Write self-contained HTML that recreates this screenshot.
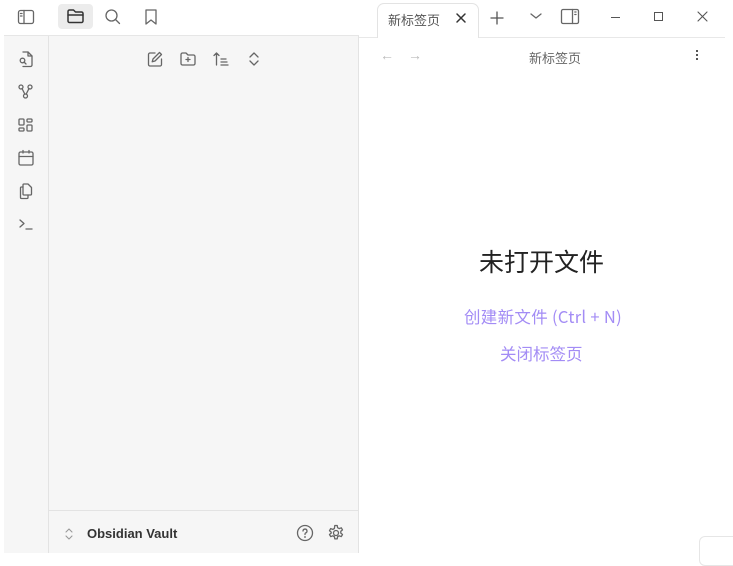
<!DOCTYPE html>
<html><head><meta charset="utf-8"><style>
*{margin:0;padding:0;box-sizing:border-box}
body{width:733px;height:558px;background:#fff;font-family:"Liberation Sans","Noto Sans CJK SC",sans-serif;position:relative;overflow:hidden}
.abs{position:absolute}
svg{position:absolute;fill:none;stroke:#666;stroke-width:1.3;stroke-linecap:round;stroke-linejoin:round}
.zh{font-family:"Noto Sans CJK SC","Liberation Sans",sans-serif}
</style></head><body>
<div class="abs" style="left:4px;top:36px;width:45px;height:517px;background:#f6f6f6;border-right:1px solid #e3e3e3"></div>
<div class="abs" style="left:49px;top:36px;width:310px;height:517px;background:#f6f6f6;border-right:1px solid #e3e3e3"></div>
<div class="abs" style="left:4px;top:35px;width:355px;height:1px;background:#e6e6e6"></div>
<div class="abs" style="left:49px;top:510px;width:310px;height:1px;background:#e3e3e3"></div>
<div class="abs" style="left:359px;top:37px;width:366px;height:1px;background:#e8e8e8"></div>
<svg style="left:17px;top:9px" width="18" height="16" viewBox="0 0 18 16"><rect x="1.5" y="1.5" width="15" height="13" rx="2"/><line x1="7" y1="1.5" x2="7" y2="14.5"/><line x1="3.5" y1="4.5" x2="5" y2="4.5"/><line x1="3.5" y1="7" x2="5" y2="7"/></svg>
<div class="abs" style="left:58px;top:4px;width:35px;height:25px;background:#ececec;border-radius:4px"></div>
<svg style="left:66px;top:8px;stroke:#333;stroke-width:1.5" width="19" height="16" viewBox="0 0 19 16"><path d="M2 3.5a1.5 1.5 0 0 1 1.5-1.5h4l2 2h6a1.5 1.5 0 0 1 1.5 1.5v7.5a1.5 1.5 0 0 1-1.5 1.5h-12a1.5 1.5 0 0 1-1.5-1.5z"/><line x1="2" y1="7" x2="17" y2="7"/></svg>
<svg style="left:104px;top:8px" width="18" height="18" viewBox="0 0 18 18"><circle cx="7.5" cy="7.5" r="5.5"/><line x1="11.5" y1="11.5" x2="15.5" y2="15.5"/></svg>
<svg style="left:143px;top:8px" width="16" height="18" viewBox="0 0 16 18"><path d="M3 2h10v14l-5-4-5 4z"/></svg>
<svg style="left:17px;top:50px" width="18" height="18" viewBox="0 0 18 18"><path d="M6 2h5l4 4v9a1.5 1.5 0 0 1-1.5 1.5H6"/><path d="M11 2v4h4"/><circle cx="5.5" cy="10.5" r="2.3"/><line x1="7" y1="12" x2="9" y2="14"/></svg>
<svg style="left:17px;top:83px" width="18" height="18" viewBox="0 0 18 18"><circle cx="4" cy="4" r="2"/><circle cx="13" cy="4" r="2"/><circle cx="8.5" cy="13" r="2"/><path d="M5 5.5l2.8 5.6M12 5.5l-2.8 5.6"/></svg>
<svg style="left:17px;top:117px" width="18" height="18" viewBox="0 0 18 18"><rect x="2" y="2" width="5" height="6" rx="1"/><rect x="10" y="2" width="5" height="3" rx="1"/><rect x="2" y="11" width="5" height="3" rx="1"/><rect x="10" y="8" width="5" height="6" rx="1"/></svg>
<svg style="left:17px;top:149px" width="18" height="18" viewBox="0 0 18 18"><rect x="2" y="3" width="14" height="13" rx="1.5"/><line x1="2" y1="7.5" x2="16" y2="7.5"/><line x1="6" y1="1.5" x2="6" y2="4"/><line x1="12" y1="1.5" x2="12" y2="4"/></svg>
<svg style="left:17px;top:182px" width="18" height="18" viewBox="0 0 18 18"><path d="M7 2h4l3.5 3.5V12a1 1 0 0 1-1 1H7a1 1 0 0 1-1-1V3a1 1 0 0 1 1-1z"/><path d="M6 5H4.5a1 1 0 0 0-1 1v9.5a1 1 0 0 0 1 1H10a1 1 0 0 0 1-1V13"/></svg>
<svg style="left:17px;top:216px" width="18" height="16" viewBox="0 0 18 16"><path d="M3 4l4 3.5-4 3.5"/><line x1="9" y1="13" x2="15" y2="13"/></svg>
<svg style="left:146px;top:50px" width="18" height="18" viewBox="0 0 18 18"><path d="M9 3H4a1.5 1.5 0 0 0-1.5 1.5v10A1.5 1.5 0 0 0 4 16h10a1.5 1.5 0 0 0 1.5-1.5V9"/><path d="M13.5 2.5l2 2-6.5 6.5-2.8.8.8-2.8z"/></svg>
<svg style="left:179px;top:50px" width="18" height="18" viewBox="0 0 18 18"><path d="M2 4.5A1.5 1.5 0 0 1 3.5 3h3.5l2 2h5.5a1.5 1.5 0 0 1 1.5 1.5v7a1.5 1.5 0 0 1-1.5 1.5h-11A1.5 1.5 0 0 1 2 13.5z"/><path d="M9 7.5v4M7 9.5h4"/></svg>
<svg style="left:212px;top:50px" width="18" height="18" viewBox="0 0 18 18"><path d="M4.5 15V3M2 5.5l2.5-2.5 2.5 2.5M9 9h5M9 12h6M9 15h7"/></svg>
<svg style="left:246px;top:50px" width="16" height="18" viewBox="0 0 16 18"><path d="M4 7l4-4 4 4M4 11l4 4 4-4"/></svg>
<svg style="left:63px;top:526px;stroke:#999;stroke-width:1.1" width="12" height="16" viewBox="0 0 12 16"><path d="M3 6l3-3 3 3M3 10l3 3 3-3"/></svg>
<div class="abs" style="left:87px;top:526px;font-size:13px;font-weight:bold;color:#333">Obsidian Vault</div>
<svg style="left:296px;top:524px" width="18" height="18" viewBox="0 0 18 18"><circle cx="9" cy="9" r="7.5"/><path d="M7 7a2 2 0 1 1 2.5 2c-.5.2-.5.7-.5 1.5"/><circle cx="9" cy="13" r=".3"/></svg>
<svg style="left:327px;top:524px" width="18" height="18" viewBox="0 0 18 18"><circle cx="9" cy="9" r="2.5"/><path d="M7.8 1.5h2.4l.4 2.2 1.6.9 2.1-.8 1.2 2.1-1.7 1.4v1.8l1.7 1.4-1.2 2.1-2.1-.8-1.6.9-.4 2.2H7.8l-.4-2.2-1.6-.9-2.1.8-1.2-2.1 1.7-1.4V8.1L2.5 6.7l1.2-2.1 2.1.8 1.6-.9z"/></svg>
<div class="abs" style="left:377px;top:3px;width:102px;height:35px;background:#fff;border:1px solid #e3e3e3;border-bottom:none;border-radius:7px 7px 0 0"></div>
<div class="abs zh" style="left:388px;top:10px;font-size:13px;color:#555">新标签页</div>
<svg style="left:455px;top:12px;stroke:#333;stroke-width:1.5" width="12" height="12" viewBox="0 0 12 12"><path d="M2 2l8 8M10 2l-8 8"/></svg>
<svg style="left:490px;top:11px;stroke:#555" width="14" height="14" viewBox="0 0 14 14"><path d="M7 1v12M1 7h12"/></svg>
<svg style="left:529px;top:11px;stroke:#666" width="14" height="10" viewBox="0 0 14 10"><path d="M2 3l5 4 5-4"/></svg>
<svg style="left:560px;top:8px" width="20" height="17" viewBox="0 0 20 17"><rect x="1.5" y="1.5" width="17" height="14" rx="1.5"/><line x1="12.5" y1="1.5" x2="12.5" y2="15.5"/><line x1="14.8" y1="4" x2="16" y2="4"/><line x1="14.8" y1="6.5" x2="16" y2="6.5"/></svg>
<div class="abs" style="left:611px;top:17px;width:9px;height:1.3px;background:#555"></div>
<div class="abs" style="left:654px;top:12px;width:9px;height:9px;border:1.3px solid #555"></div>
<svg style="left:697px;top:11px;stroke:#555;stroke-width:1.1" width="11" height="11" viewBox="0 0 11 11"><path d="M1 1l9 9M10 1l-9 9"/></svg>
<div class="abs" style="left:380px;top:47px;font-size:14px;color:#bbb">←</div>
<div class="abs" style="left:408px;top:47px;font-size:14px;color:#bbb">→</div>
<div class="abs zh" style="left:529px;top:48px;font-size:13px;color:#666">新标签页</div>
<div class="abs" style="left:696px;top:50px;width:2px;height:2px;background:#555;box-shadow:0 4px #555,0 8px #555"></div>
<div class="abs zh" style="left:479px;top:243px;font-size:25px;color:#222">未打开文件</div>
<div class="abs zh" style="left:464px;top:304px;font-size:16.5px;color:#a38cf5;letter-spacing:0.3px">创建新文件 (Ctrl + N)</div>
<div class="abs zh" style="left:500px;top:341px;font-size:16.5px;color:#a38cf5">关闭标签页</div>
<div class="abs" style="left:699px;top:536px;width:40px;height:30px;border:1px solid #e6e6e6;border-radius:6px"></div>
</body></html>
